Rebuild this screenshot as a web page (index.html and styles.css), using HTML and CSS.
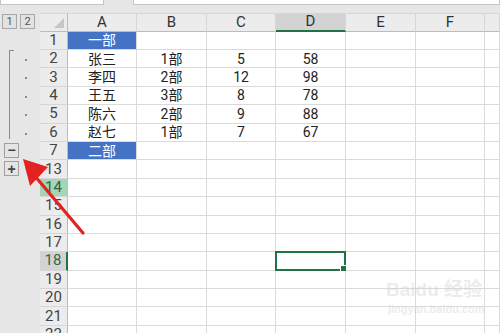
FILE: index.html
```html
<!doctype html>
<html>
<head>
    <title>分组</title>
    <link rel="stylesheet" href="styles.css">
</head>
<body>
    <div class="topbar"><div class="box name"></div><div class="box formula"></div></div>
    <div class="sheet">
        <div class="row head">
            <div class="ol levels"><span class="lvl">1</span><span class="lvl">2</span></div>
            <div class="rh corner"><span class="tri"></span></div>
            <div class="ch">A</div><div class="ch">B</div><div class="ch">C</div><div class="ch sel">D</div><div class="ch">E</div><div class="ch">F</div><div class="ch"></div>
        </div>
        <div class="row">
            <div class="ol"></div><div class="rh">1</div>
            <div class="c dept">一部</div><div class="c"></div><div class="c"></div><div class="c"></div><div class="c"></div><div class="c"></div><div class="c"></div>
        </div>
        <div class="row">
            <div class="ol br top"><span class="dot"></span></div><div class="rh">2</div>
            <div class="c">张三</div><div class="c">1部</div><div class="c">5</div><div class="c">58</div><div class="c"></div><div class="c"></div><div class="c"></div>
        </div>
        <div class="row">
            <div class="ol br"><span class="dot"></span></div><div class="rh">3</div>
            <div class="c">李四</div><div class="c">2部</div><div class="c">12</div><div class="c">98</div><div class="c"></div><div class="c"></div><div class="c"></div>
        </div>
        <div class="row">
            <div class="ol br"><span class="dot"></span></div><div class="rh">4</div>
            <div class="c">王五</div><div class="c">3部</div><div class="c">8</div><div class="c">78</div><div class="c"></div><div class="c"></div><div class="c"></div>
        </div>
        <div class="row">
            <div class="ol br"><span class="dot"></span></div><div class="rh">5</div>
            <div class="c">陈六</div><div class="c">2部</div><div class="c">9</div><div class="c">88</div><div class="c"></div><div class="c"></div><div class="c"></div>
        </div>
        <div class="row">
            <div class="ol br end"><span class="dot"></span></div><div class="rh">6</div>
            <div class="c">赵七</div><div class="c">1部</div><div class="c">7</div><div class="c">67</div><div class="c"></div><div class="c"></div><div class="c"></div>
        </div>
        <div class="row">
            <div class="ol"><span class="btn">−</span></div><div class="rh">7</div>
            <div class="c dept">二部</div><div class="c"></div><div class="c"></div><div class="c"></div><div class="c"></div><div class="c"></div><div class="c"></div>
        </div>
        <div class="row">
            <div class="ol"><span class="btn">+</span></div><div class="rh">13</div>
            <div class="c"></div><div class="c"></div><div class="c"></div><div class="c"></div><div class="c"></div><div class="c"></div><div class="c"></div>
        </div>
        <div class="row">
            <div class="ol"></div><div class="rh green">14</div>
            <div class="c"></div><div class="c"></div><div class="c"></div><div class="c"></div><div class="c"></div><div class="c"></div><div class="c"></div>
        </div>
        <div class="row">
            <div class="ol"></div><div class="rh">15</div>
            <div class="c"></div><div class="c"></div><div class="c"></div><div class="c"></div><div class="c"></div><div class="c"></div><div class="c"></div>
        </div>
        <div class="row">
            <div class="ol"></div><div class="rh">16</div>
            <div class="c"></div><div class="c"></div><div class="c"></div><div class="c"></div><div class="c"></div><div class="c"></div><div class="c"></div>
        </div>
        <div class="row">
            <div class="ol"></div><div class="rh">17</div>
            <div class="c"></div><div class="c"></div><div class="c"></div><div class="c"></div><div class="c"></div><div class="c"></div><div class="c"></div>
        </div>
        <div class="row">
            <div class="ol"></div><div class="rh sel">18</div>
            <div class="c"></div><div class="c"></div><div class="c"></div><div class="c active"></div><div class="c"></div><div class="c"></div><div class="c"></div>
        </div>
        <div class="row">
            <div class="ol"></div><div class="rh">19</div>
            <div class="c"></div><div class="c"></div><div class="c"></div><div class="c"></div><div class="c"></div><div class="c"></div><div class="c"></div>
        </div>
        <div class="row">
            <div class="ol"></div><div class="rh">20</div>
            <div class="c"></div><div class="c"></div><div class="c"></div><div class="c"></div><div class="c"></div><div class="c"></div><div class="c"></div>
        </div>
        <div class="row">
            <div class="ol"></div><div class="rh">21</div>
            <div class="c"></div><div class="c"></div><div class="c"></div><div class="c"></div><div class="c"></div><div class="c"></div><div class="c"></div>
        </div>
        <div class="row">
            <div class="ol"></div><div class="rh">22</div>
            <div class="c"></div><div class="c"></div><div class="c"></div><div class="c"></div><div class="c"></div><div class="c"></div><div class="c"></div>
        </div>
    </div>

    <!-- red pointer over the collapse button -->
    <svg class="arrow" width="100" height="100" viewBox="0 0 100 100">
        <line x1="83" y1="74" x2="34" y2="16" stroke="#e32222" stroke-width="3.2" stroke-linecap="round" />
        <polygon points="23,0 48,8 30,27" fill="#e32222" />
    </svg>

    <div class="watermark">
        <div class="wm-big">Baidu 经验</div>
        <div class="wm-small">jingyan.baidu.com</div>
    </div>
</body>
</html>
```

FILE: styles.css
```css
* {
    box-sizing: border-box;
}
body {
    margin: 0;
    width: 500px;
    height: 333px;
    overflow: hidden;
    position: relative;
    background: #e6e6e6;
    font-family: Roboto, "Noto Sans CJK SC", sans-serif;
}
.topbar {
    height: 13px;
    display: flex;
    gap: 29px;
}
.box {
    height: 5px;
    background: #fff;
    border: 1px solid #c4c4c4;
    border-top: 0;
}
.name {
    width: 104px;
}
.formula {
    flex: 1;
}
.row {
    display: grid;
    grid-template-columns: 40px 28px 69px 70px 69px 70px 70px 69px 1fr;
    height: 18.4px;
}
.row.head {
    height: 18.6px;
}
.ol {
    position: relative;
}
.levels {
    display: flex;
    gap: 3px;
    padding: 1px 0 0 2px;
}
.lvl {
    width: 15px;
    height: 15px;
    border: 1px solid #a8a8a8;
    background: #e2e2e2;
    font-size: 11px;
    color: #555;
    display: flex;
    align-items: center;
    justify-content: center;
    line-height: 1;
}
.br::before {
    content: "";
    position: absolute;
    left: 9px;
    top: 0;
    bottom: 0;
    border-left: 1px solid #8a8a8a;
}
.br.top::after {
    content: "";
    position: absolute;
    left: 9px;
    top: 0;
    width: 5px;
    border-top: 1px solid #8a8a8a;
}
.br.end::before {
    bottom: 3px;
}
.dot {
    position: absolute;
    left: 25px;
    top: 9px;
    width: 2px;
    height: 2px;
    background: #8a8a8a;
}
.btn {
    position: absolute;
    left: 4px;
    top: 1px;
    width: 15px;
    height: 15px;
    border: 1px solid #a0a0a0;
    background: #e4e4e4;
    color: #444;
    font-family: "Liberation Sans", sans-serif;
    font-size: 14px;
    font-weight: bold;
    line-height: 1;
    display: flex;
    align-items: center;
    justify-content: center;
}
.rh {
    background: #ececec;
    border-bottom: 1px solid #d6d6d6;
    border-right: 1px solid #bcbcbc;
    display: flex;
    align-items: center;
    justify-content: center;
    font-size: 15px;
    line-height: 1;
    color: #444;
}
.rh.corner {
    border-top: 1px solid #d6d6d6;
    border-bottom: 1px solid #bcbcbc;
    position: relative;
}
.tri {
    position: absolute;
    right: 3px;
    bottom: 3px;
    width: 0;
    height: 0;
    border-left: 10px solid transparent;
    border-bottom: 10px solid #c6c6c6;
}
.rh.green {
    background: #a3d6b3;
    color: #3a5a44;
}
.rh.sel {
    background: #d3d3d3;
    color: #2e6b45;
    border-right: 2px solid #217346;
}
.ch {
    background: #ececec;
    border-top: 1px solid #d6d6d6;
    border-bottom: 1px solid #bcbcbc;
    border-right: 1px solid #d6d6d6;
    display: flex;
    align-items: center;
    justify-content: center;
    font-size: 15px;
    line-height: 1;
    color: #333;
}
.ch.sel {
    background: #d3d3d3;
    border-bottom: 2px solid #217346;
}
.c {
    background: #fff;
    border-bottom: 1px solid #dadada;
    border-right: 1px solid #dadada;
    display: flex;
    align-items: center;
    justify-content: center;
    font-size: 14px;
    line-height: 1;
    color: #222;
    position: relative;
}
.c.dept {
    background: #4472c4;
    color: #fff;
}
.c.active {
    border: 2px solid #217346;
    margin: -1px 0 0 -1px;
}
.c.active::after {
    content: "";
    position: absolute;
    right: -4px;
    bottom: -4px;
    width: 6px;
    height: 6px;
    background: #217346;
    border: 1px solid #fff;
}
.arrow {
    position: absolute;
    left: 0;
    top: 159px;
}
.watermark {
    position: absolute;
    left: 386px;
    top: 279px;
    color: rgba(205, 205, 205, 0.4);
    font-family: "Liberation Sans", "Noto Sans CJK SC", sans-serif;
}
.wm-big {
    font-size: 19px;
    font-weight: bold;
    line-height: 22px;
}
.wm-small {
    font-size: 11px;
    font-weight: bold;
    line-height: 16px;
    padding-left: 2px;
}
```
